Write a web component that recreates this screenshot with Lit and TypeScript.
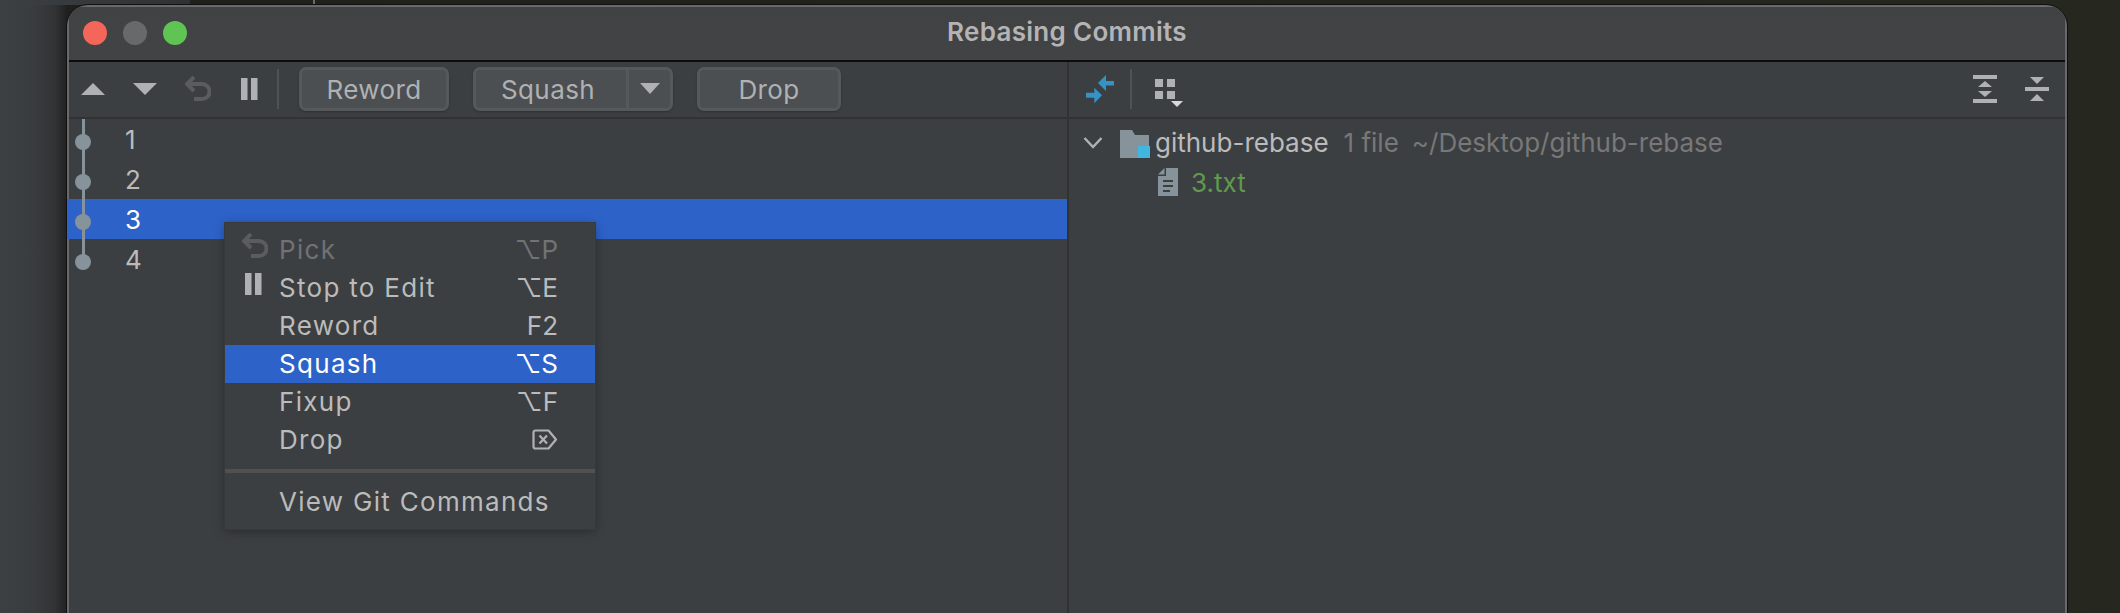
import { LitElement, css, html, svg } from "lit";
import { customElement } from "lit/decorators.js";

const undoIcon = html`<svg width="26" height="26" viewBox="0 0 26 26" fill="none" stroke="currentColor" stroke-width="4">
    <path d="M9 1 2 8l7 7" stroke-linejoin="miter"/><path d="M3 8h14a6.500 6.500 0 0 1 0 15H9"/>
</svg>`;

const pauseIcon = html`<svg width="17" height="22" viewBox="0 0 17 22" fill="currentColor">
    <rect width="6.500" height="22"/><rect x="10" width="6.500" height="22"/>
</svg>`;

const deleteIcon = html`<svg width="26" height="21" viewBox="0 0 26 21" fill="none" stroke="#afb1b3" stroke-width="2.200" style="display:block">
    <path d="M3.500 1.500h13L24 10.500l-7.500 9h-13a2 2 0 0 1-2-2v-14a2 2 0 0 1 2-2z" stroke-linejoin="round"/>
    <path d="M7.500 6.500l7.500 8M15 6.500l-7.500 8"/>
</svg>`;

const triangle = (w: number, h: number, down = false) => svg`
    <polygon points=${down ? `0,0 ${w},0 ${w / 2},${h}` : `0,${h} ${w},${h} ${w / 2},0`}></polygon>`;

const COMMITS = ["1", "2", "3", "4"];

const MENU = [
    { label: "Pick", key: "⌥P", disabled: true, icon: undoIcon },
    { label: "Stop to Edit", key: "⌥E", icon: pauseIcon },
    { label: "Reword", key: "F2" },
    { label: "Squash", key: "⌥S", active: true },
    { label: "Fixup", key: "⌥F" },
    { label: "Drop", key: deleteIcon },
];

@customElement("app-root")
export class AppRoot extends LitElement {
    static styles = css`
        :host {
            display: block;
            position: relative;
            height: 613px;
            overflow: hidden;
            padding: 4px 52px 0 66px;
            box-sizing: border-box;
            font-family: Inter, "Liberation Sans", sans-serif;
            font-size: 26px;
            color: #bbbbbb;
            background: linear-gradient(90deg, #3c4043 0, #3a3d3f 30px, #323334 55px, #222222 66px, #1f201b 67px, #26271f 2120px);
        }

        .top-left {
            position: absolute;
            left: 0;
            top: 0;
            width: 190px;
            height: 5px;
            background: linear-gradient(90deg, #3c4043 0, #303132 100%);
        }

        .top-mark {
            position: absolute;
            left: 313px;
            top: 0;
            width: 2px;
            height: 5px;
            background: #6a6a6a;
        }

        .window {
            position: relative;
            height: 640px;
            border: 1px solid #111111;
            border-radius: 22px 22px 0 0;
            overflow: hidden;
            background: #3c3f41;
        }

        .frame {
            height: 100%;
            box-sizing: border-box;
            border: solid #69696b;
            border-width: 2px 2px 0;
            border-radius: 21px 21px 0 0;
        }

        .title {
            height: 53px;
            display: flex;
            align-items: center;
            justify-content: center;
            position: relative;
            background: linear-gradient(#414244, #424345);
            border-bottom: 2px solid #0c0c0c;
            font-size: 26px;
            font-weight: 600;
            letter-spacing: 0.3px;
            color: #b4b4b5;
        }

        .title-text {
            margin-bottom: 5px;
        }

        .lights {
            position: absolute;
            left: 14px;
            top: 14px;
            display: flex;
            gap: 16px;
        }

        .lights span {
            width: 24px;
            height: 24px;
            border-radius: 50%;
        }

        .body {
            height: 100%;
            display: grid;
            grid-template-columns: 1000px 1fr;
        }

        .left {
            border-right: 2px solid #323232;
        }

        .bar {
            height: 57px;
            box-sizing: border-box;
            border-bottom: 2px solid #323232;
            padding-bottom: 2px;
            display: flex;
            align-items: center;
            background: #3c3f41;
        }

        .left .bar {
            padding-left: 12px;
        }

        .bar svg {
            display: block;
            fill: #afb1b3;
        }

        .undo {
            color: #5a5c5e;
            margin: 0 30px 0 28px;
        }

        .undo svg {
            fill: none;
        }

        .sep {
            width: 2px;
            height: 40px;
            background: #505254;
        }

        .btn {
            height: 44px;
            box-sizing: border-box;
            padding-top: 2px;
            display: flex;
            align-items: center;
            justify-content: center;
            border: 3px solid #56595b;
            border-radius: 7px;
            background: #4b4f51;
            box-shadow: 0 1px 2px #2e3031;
            font-size: 26px;
            letter-spacing: 0.4px;
            color: #afb1b3;
        }

        .reword {
            width: 150px;
            margin-left: 20px;
        }

        .split {
            width: 200px;
            margin-left: 24px;
            padding-top: 0;
            justify-content: flex-start;
        }

        .split .text {
            width: 144px;
            padding: 2px 6px 0 0;
            text-align: center;
            border-right: 3px solid #56595b;
            line-height: 36px;
        }

        .split .arrow {
            flex: 1;
            display: flex;
            justify-content: center;
        }

        .drop {
            width: 144px;
            margin-left: 24px;
        }

        .row {
            height: 40px;
            position: relative;
            display: flex;
            align-items: center;
            padding-left: 56px;
        }

        .row.selected {
            background: #2d62c8;
            box-shadow: -2px 0 0 #2d62c8;
            color: #ffffff;
        }

        .row::before {
            content: "";
            position: absolute;
            left: 13px;
            top: 0;
            bottom: 0;
            width: 3px;
            background: #87939a;
        }

        .row:last-of-type::before {
            bottom: 17px;
        }

        .row i {
            position: absolute;
            left: 6px;
            top: 15px;
            width: 16px;
            height: 16px;
            border-radius: 50%;
            background: #87939a;
        }

        .right .bar {
            padding-left: 17px;
        }

        .right .sep {
            margin: 0 23px 0 16px;
        }

        .spacer {
            flex: 1;
        }

        .tree {
            padding: 2px 0 0 14px;
        }

        .tree-row {
            height: 43px;
            display: flex;
            align-items: center;
        }

        .tree-row .chev {
            width: 37px;
        }

        .tree-row .folder {
            margin: 2px 5px 0 0;
        }

        .tree-row .dim {
            color: #787878;
            margin-left: 15px;
        }

        .tree-row .path {
            margin-left: 13px;
        }

        .tree-file {
            height: 36px;
            padding-left: 75px;
            display: flex;
            align-items: center;
            gap: 13px;
            color: #5f9a4e;
        }

        .menu {
            position: absolute;
            left: 225px;
            top: 223px;
            width: 370px;
            box-sizing: border-box;
            padding: 8px 0;
            background: #3c3f41;
            box-shadow: 0 0 0 1px #37393b, 0 2px 10px rgba(0, 0, 0, 0.35);
            letter-spacing: 1.3px;
        }

        .item {
            height: 38px;
            box-sizing: border-box;
            position: relative;
            display: flex;
            align-items: center;
            justify-content: space-between;
            padding: 0 37px 2px 54px;
        }

        .item.active {
            background: #2d62c8;
            color: #ffffff;
        }

        .item.disabled {
            color: #707274;
        }

        .item .icon {
            position: absolute;
            left: 17px;
            top: 2px;
            color: #5a5c5e;
        }

        .item .icon.pause {
            left: 20px;
            top: 4px;
            color: #afb1b3;
        }

        .item .icon svg {
            display: block;
        }

        .key {
            font-family: Inter, "DejaVu Sans", sans-serif;
            font-size: 26px;
            letter-spacing: 0;
        }

        .menu hr {
            height: 4px;
            margin: 10px 0;
            border: 0;
            background: #515151;
        }
    `;

    render() {
        return html`
            <div class="top-left"></div>
            <div class="top-mark"></div>
            <div class="window">
                <div class="frame">
                    <div class="title">
                        <div class="lights">
                            <span style="background:#f4665a"></span>
                            <span style="background:#68696b"></span>
                            <span style="background:#5fc454"></span>
                        </div>
                        <span class="title-text">Rebasing Commits</span>
                    </div>
                    <div class="body">
                        <div class="left">
                            <div class="bar">
                                <svg width="24" height="12" viewBox="0 0 24 12">${triangle(24, 12)}</svg>
                                <svg width="24" height="12" viewBox="0 0 24 12" style="margin-left:28px">${triangle(24, 12, true)}</svg>
                                <span class="undo">${undoIcon}</span>
                                ${pauseIcon}
                                <span class="sep" style="margin-left:19px"></span>
                                <div class="btn reword">Reword</div>
                                <div class="btn split">
                                    <span class="text">Squash</span>
                                    <span class="arrow">
                                        <svg width="20" height="11" viewBox="0 0 20 11">${triangle(20, 11, true)}</svg>
                                    </span>
                                </div>
                                <div class="btn drop">Drop</div>
                            </div>
                            <div class="rows">
                                ${COMMITS.map((c) => html`
                                    <div class="row ${c === "3" ? "selected" : ""}"><i></i>${c}</div>
                                `)}
                            </div>
                        </div>
                        <div class="right">
                            <div class="bar">
                                <svg width="28" height="28" viewBox="0 0 28 28" style="fill:#3592c4">
                                    <path d="M20 0v6h8v4.500h-8V16l-8-8zM8.300 12.700 16 20.300l-7.700 8V22.700H0v-5h8.300z"/>
                                </svg>
                                <span class="sep"></span>
                                <svg width="28" height="28" viewBox="0 0 28 28" style="margin-top:9px">
                                    <rect x="0" y="0" width="8" height="8"/>
                                    <rect x="12" y="0" width="8" height="8"/>
                                    <rect x="0" y="12" width="8" height="8"/>
                                    <rect x="12" y="12" width="8" height="8"/>
                                    <polygon points="16,22 28,22 22,28" style="fill:#d8d8d8"/>
                                </svg>
                                <span class="spacer"></span>
                                <svg width="24" height="28" viewBox="0 0 24 28">
                                    <rect width="24" height="4"/>
                                    <rect y="24" width="24" height="4"/>
                                    <polygon points="5,12 19,12 12,6"/>
                                    <polygon points="5,16 19,16 12,22"/>
                                </svg>
                                <svg width="24" height="24" viewBox="0 0 24 24" style="margin:0 16px 0 28px">
                                    <rect y="10" width="24" height="4"/>
                                    <polygon points="5,0 19,0 12,7"/>
                                    <polygon points="5,24 19,24 12,17"/>
                                </svg>
                            </div>
                            <div class="tree">
                                <div class="tree-row">
                                    <svg class="chev" width="36" height="12" viewBox="0 0 36 12" fill="none" stroke="#afb1b3" stroke-width="2.500">
                                        <path d="M1 1l8.500 9L18 1"/>
                                    </svg>
                                    <svg class="folder" width="30" height="28" viewBox="0 0 30 28">
                                        <path d="M0 0h12l3 5h14v11H18v12H0z" fill="#87939a"/>
                                        <rect x="18" y="16" width="12" height="12" fill="#40b6e0"/>
                                    </svg>
                                    github-rebase
                                    <span class="dim">1 file</span>
                                    <span class="dim path">~/Desktop/github-rebase</span>
                                </div>
                                <div class="tree-file">
                                    <svg width="20" height="28" viewBox="0 0 20 28">
                                        <path fill-rule="evenodd" d="M8 0h12v28H0V8h8zM5 12v2h10v-2zM5 17v2h10v-2zM5 22v2h7v-2z" fill="#87939a"/>
                                        <polygon points="0,6.500 6.500,0 6.500,6.500" fill="#87939a"/>
                                    </svg>
                                    3.txt
                                </div>
                            </div>
                        </div>
                    </div>
                </div>
            </div>
            <div class="menu">
                ${MENU.map((m) => html`
                    <div class="item ${m.active ? "active" : ""} ${m.disabled ? "disabled" : ""}">
                        ${m.icon ? html`<span class="icon ${m.disabled ? "" : "pause"}">${m.icon}</span>` : ""}
                        <span>${m.label}</span>
                        <span class="key">${m.key}</span>
                    </div>
                `)}
                <hr />
                <div class="item"><span>View Git Commands</span></div>
            </div>
        `;
    }
}
